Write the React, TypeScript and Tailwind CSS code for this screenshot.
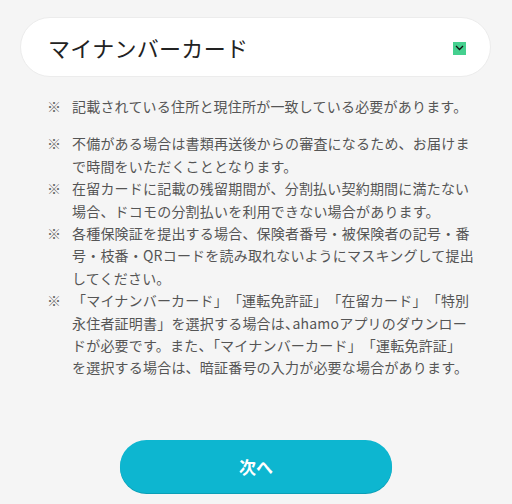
import React from "react";

const Trim = ({ c }: { c: string }) => <span className="tracking-[-6.5px]">{c}</span>;

const notes: React.ReactNode[][] = [
  ["不備がある場合は書類再送後からの審査になるため、お届けま", "で時間をいただくこととなります。"],
  ["在留カードに記載の残留期間が、分割払い契約期間に満たない", "場合、ドコモの分割払いを利用できない場合があります。"],
  ["各種保険証を提出する場合、保険者番号・被保険者の記号・番", "号・枝番・QRコードを読み取れないようにマスキングして提出", "してください。"],
  [
    "「マイナンバーカード」「運転免許証」「在留カード」「特別",
    <>
      永住者証明書」を選択する場合は<Trim c="、" />ahamoアプリのダウンロー
    </>,
    <>
      ドが必要です。また<Trim c="、" />「マイナンバーカード」「運転免許証」
    </>,
    "を選択する場合は、暗証番号の入力が必要な場合があります。",
  ],
];

function Note({ lines }: { lines: React.ReactNode[] }) {
  return (
    <div className="flex">
      <span className="w-[25px] shrink-0 text-[#666]">※</span>
      <div className="whitespace-nowrap">
        {lines.map((l, i) => (
          <div key={i}>{l}</div>
        ))}
      </div>
    </div>
  );
}

export default function App() {
  return (
    <div
      className="w-[512px] h-[504px] bg-[#f5f5f5] overflow-hidden flex flex-col [text-spacing-trim:space-all]"
      style={{ fontFamily: '"Noto Sans CJK JP", "Noto Sans", sans-serif' }}
    >
      <div className="mt-[17px] ml-[20px] w-[471px] h-[60px] rounded-full bg-white border border-[#ececec] flex items-center justify-between pl-[27px] pr-[24px]">
        <span className="text-[22px] text-[#222] tracking-[0.3px]">マイナンバーカード</span>
        <span className="w-[13px] h-[13px] mt-[2px] bg-[#45d08f] flex items-center justify-center">
          <svg width="9" height="6" viewBox="0 0 9 6" fill="none">
            <path d="M1 1l3.5 3.5L8 1" stroke="#111" strokeWidth="1.3" />
          </svg>
        </span>
      </div>
      <div className="mt-[18px] pl-[47px] text-[14px] leading-[22.4px] text-[#555] tracking-[0.2px]">
        <Note lines={["記載されている住所と現住所が一致している必要があります。"]} />
        <div className="mt-[15px]">
          {notes.map((n, i) => (
            <Note key={i} lines={n} />
          ))}
        </div>
      </div>
      <div className="mt-auto mb-[11px] flex justify-center">
        <button className="w-[272px] h-[53px] rounded-full bg-[#0db6d0] text-white text-[17px] font-bold shadow-[0_1px_0_#0a9fb6]">
          次へ
        </button>
      </div>
    </div>
  );
}
